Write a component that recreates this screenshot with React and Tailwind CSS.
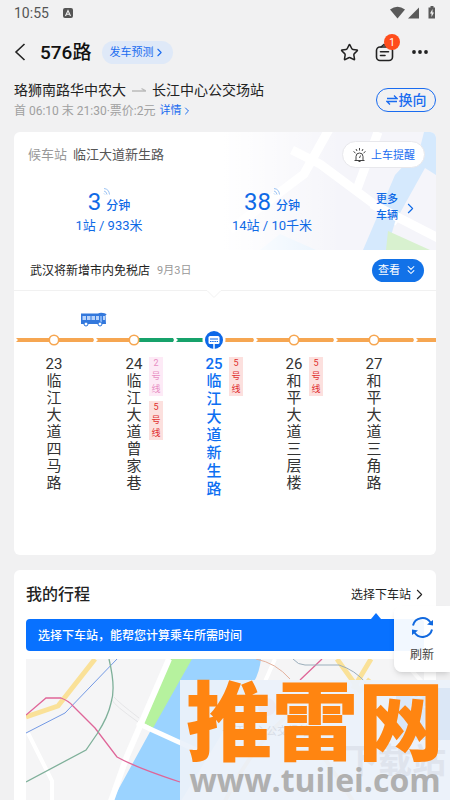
import React from "react";
import { Star, ChevronRight, ChevronsDown } from "lucide-react";

const stations = [
  { no: 23, name: "临江大道四马路", tags: [], left: "#f6a651", right: "#f6a651" },
  { no: 24, name: "临江大道曾家巷", tags: [{ no: 2, pink: true }, { no: 5 }], left: "#f6a651", right: "#17a26b" },
  { no: 25, name: "临江大道新生路", tags: [{ no: 5 }], left: "#17a26b", right: "#f6a651", current: true },
  { no: 26, name: "和平大道三层楼", tags: [{ no: 5 }], left: "#f6a651", right: "#f6a651" },
  { no: 27, name: "和平大道三角路", tags: [], left: "#f6a651", right: "#f6a651" },
  { no: 28, name: "", tags: [], left: "#f6a651", right: "#f6a651", blank: true },
];

function StatusBar() {
  return (
    <div className="flex h-6 shrink-0 items-center justify-between px-[14px] pt-px text-sm text-[#555]">
      <div className="flex items-center gap-[14px]">
        <span>10:55</span>
        <svg className="h-[10px] w-[10px]" viewBox="0 0 10 10" aria-hidden="true">
          <rect width="10" height="10" rx="2" fill="#555" />
          <path d="M2.5 8 5 2.5 7.5 8M3.5 6.2h3" fill="none" stroke="#f1f1f1" strokeWidth="1.1" />
        </svg>
      </div>
      <svg className="h-[13px] w-[46px]" viewBox="0 0 46 13" fill="#5a5a5a" aria-hidden="true">
        <path d="M0 3.5Q7.5-2 15 3.5L7.5 12.5Z" />
        <path d="M29 1.5v11H18Z" />
        <path d="M40.5 0h3v1.5H45v11h-6.5V1.5h2Z" />
        <path d="m42.5 3-2.5 4.5h1.5V11L44 6.5h-1.5Z" fill="#f1f1f1" />
      </svg>
    </div>
  );
}

function Header() {
  return (
    <header className="flex h-14 shrink-0 items-center pl-[9px] pr-[21px]">
      <button aria-label="返回" className="text-[#222]">
        <svg className="h-6 w-6" viewBox="0 0 24 24" fill="none" stroke="currentColor" strokeWidth="1.6" aria-hidden="true"><path d="m15.5 4-8.5 8 8.5 8" /></svg>
      </button>
      <h1 className="ml-[7px] pt-[2px] text-[19px] font-medium text-[#111]">576路</h1>
      <button className="ml-[11px] flex h-[23px] items-center rounded-full bg-[#dfe9f8] px-[7px] text-[11px] leading-[23px] text-[#1a6cf0]">
        <span className="pt-px">发车预测</span><ChevronRight size={13} strokeWidth={2} />
      </button>
      <div className="ml-auto flex items-center gap-4 text-[#222]">
        <button aria-label="收藏"><Star size={19} strokeWidth={1.9} /></button>
        <button aria-label="消息" className="relative">
          <svg className="h-5 w-5" viewBox="0 0 20 20" fill="none" stroke="currentColor" strokeWidth="1.6" strokeLinecap="round" aria-hidden="true">
            <rect x="1.5" y="5" width="16" height="13.5" rx="3.5" />
            <path d="M6 5 9 2.5 12 5M5.5 9.8h8M5.5 13.5H10" />
          </svg>
          <span className="absolute -top-[8px] left-[9px] flex h-4 w-4 items-center justify-center rounded-full bg-[#ff4d1c] text-[10px] text-white">1</span>
        </button>
        <button aria-label="更多">
          <svg className="h-5 w-[18px]" viewBox="0 0 18 20" fill="currentColor" aria-hidden="true"><circle cx="3" cy="10" r="1.9" /><circle cx="9" cy="10" r="1.9" /><circle cx="15" cy="10" r="1.9" /></svg>
        </button>
      </div>
    </header>
  );
}

function RouteInfo() {
  return (
    <section className="flex h-[52px] shrink-0 justify-between px-[14px]">
      <div>
        <h2 className="flex items-center text-sm leading-5 text-[#222]">
          珞狮南路华中农大
          <svg className="mx-[6px] h-2 w-[14px]" viewBox="0 0 14 8" fill="none" stroke="#bbb" strokeWidth="1.3" aria-hidden="true"><path d="M0 5h14L9.5 2.5" /></svg>
          长江中心公交场站
        </h2>
        <p className="flex items-center pt-px text-xs leading-5 text-[#a0a0a0]">
          首 06:10 末 21:30·票价:2元
          <a href="#detail" className="ml-1 flex items-center text-[11px] text-[#1a6cf0]">详情<ChevronRight size={12} strokeWidth={2} /></a>
        </p>
      </div>
      <button className="mt-2 flex h-6 w-[60px] items-center justify-center gap-px rounded-full border border-[#1a6cf0] text-sm font-medium text-[#1a6cf0]">
        <svg className="h-3 w-3" viewBox="0 0 12 12" fill="none" stroke="currentColor" strokeWidth="1.3" aria-hidden="true"><path d="M1 4.5h10L8 1.5M11 7.5H1l3 3" /></svg>
        换向
      </button>
    </section>
  );
}

function Arrival({ minutes, detail }) {
  return (
    <div className="text-center text-[#0f6ae6]">
      <div className="flex items-end justify-center gap-[5px]">
        <span className="text-2xl leading-7">{minutes}</span>
        <span className="relative text-xs font-medium leading-5">
          分钟
          <svg className="absolute -left-[3px] -top-[8px] h-[7px] w-[7px]" viewBox="0 0 7 7" fill="none" stroke="#9cc3f3" aria-hidden="true"><path d="M1 .5Q6 1 6.5 6.5M1 3Q3.5 3.5 4 6.5M1 5.5l1 1" /></svg>
        </span>
      </div>
      <p className="text-[13px] leading-5">{detail}</p>
    </div>
  );
}

function WaitingPanel() {
  return (
    <div className="relative h-[118px] overflow-hidden">
      <svg className="absolute right-0 top-0 h-[118px] w-[236px]" viewBox="0 0 236 118" aria-hidden="true">
        <defs>
          <linearGradient id="fade" x1="0" x2="1"><stop offset=".1" stopColor="#fff" /><stop offset=".6" stopColor="#fff" stopOpacity="0" /></linearGradient>
        </defs>
        <path fill="#f5f5fa" d="M0 0h236v118H0z" />
        <path fill="none" stroke="#fff" strokeWidth="9" d="m132-8-28 50-74 56M92 18l28 14 78 58M178 0l-22 60" />
        <path fill="#d5e9fd" d="M224 0h12v43l-11-7-30 54-8 28h-24l32-75 25-27Z" />
        <path fill="#e8f3fd" d="m60 118 20-16 36 16Z" />
        <path fill="#d8f1cf" d="m188 99 42 19h-44Z" />
        <path stroke="#fff" strokeWidth="9" d="m172 72 70 36" />
        <path fill="url(#fade)" d="M0 0h236v118H0z" />
      </svg>
      <div className="relative flex items-center justify-between pl-[14px] pr-[11px] pt-[9px]">
        <p className="flex gap-[6px] text-[13px] leading-5 text-[#555]"><span className="text-[#999]">候车站</span>临江大道新生路</p>
        <button className="flex h-[27px] items-center gap-[5px] rounded-full border border-[#e8e8ec] bg-white pl-[10px] pr-[9px] text-[11px] leading-[25px] text-[#1a6cf0]">
          <svg className="h-[14px] w-[13px]" viewBox="0 0 13 14" fill="none" stroke="#444" aria-hidden="true"><path d="M1.5 12.5h10M3 12V8.5Q3 5 6.5 5T10 8.5V12M5.5 13.5h2M6.5 0v2.5M3 1l1 2M10 1 9 3M.5 3.5 2.5 5M12.5 3.5l-2 1.5M6.5 10l1-2.5" /></svg>
          <span className="pt-px">上车提醒</span>
        </button>
      </div>
      <div className="relative flex pt-5">
        <div className="w-[190px]"><Arrival minutes="3" detail="1站 / 933米" /></div>
        <div className="w-[136px]"><Arrival minutes="38" detail="14站 / 10千米" /></div>
        <button className="mb-2 ml-auto flex items-center gap-1 pr-[17px] text-[11px] font-medium leading-4 text-[#0f6ae6]"><span>更多<br />车辆</span><ChevronRight size={17} strokeWidth={1.5} /></button>
      </div>
    </div>
  );
}

function Track({ s }) {
  return (
    <svg className="block h-6 w-20" viewBox="0 0 80 24" aria-hidden="true">
      <path fill={s.left} d="M2 10h38v4H2l2-2Z" />
      <path fill={s.right} d="M40 10h39l1 2-1 2H40Z" />
      {s.current ? (
        <g>
          <circle cx="40" cy="12" r="11.5" fill="#fff" />
          <circle cx="40" cy="12" r="9" fill="#0d68e8" />
          <rect x="34.5" y="8" width="11" height="8" rx="1.5" fill="#fff" />
          <path stroke="#fff" strokeWidth="1.5" d="M40 16v5" />
          <path stroke="#0d68e8" d="M36 11h8" />
          <path stroke="#0d68e8" d="M36 13.5h8" strokeDasharray="1.5 .7" />
        </g>
      ) : s.blank ? null : (
        <circle cx="40" cy="12" r="4.7" fill="#fff" stroke="#f6a651" strokeWidth="1.6" />
      )}
    </svg>
  );
}

function Station({ s }) {
  return (
    <li className="w-20 shrink-0">
      <Track s={s} />
      {!s.blank && (
        <div className="relative mt-1 flex justify-center">
          <button className={s.current ? "flex flex-col items-center text-[15px] font-medium leading-[18px] text-[#0d6ff2]" : "flex flex-col items-center text-[15px] leading-[17px] text-[#333]"}>
            <span className={s.current ? "leading-4" : "leading-[17px]"}>{s.no}</span>
            <span className="w-[15px] break-all">{s.name}</span>
          </button>
          <div className="absolute left-[55px] top-px flex flex-col gap-[5px]">
            {s.tags.map((t) => (
              <span key={t.no} className={t.pink ? "w-[14px] bg-[#fdeaf6] px-[2px] text-center text-[9px] leading-[13px] text-[#e88fc4] break-all" : "w-[14px] bg-[#fce0de] px-[2px] text-center text-[9px] leading-[13px] text-[#e02f2f] break-all"}>
                {t.no}<br />号线
              </span>
            ))}
          </div>
        </div>
      )}
    </li>
  );
}

function LineCard() {
  return (
    <section className="h-[423px] shrink-0 overflow-hidden rounded-md bg-white">
      <WaitingPanel />
      <div className="flex h-10 items-center pl-4 pr-3 text-xs">
        <span className="pt-px text-[#222]">武汉将新增市内免税店</span>
        <span className="ml-[7px] pt-[2px] text-[11px] text-[#999]">9月3日</span>
        <button className="ml-auto flex h-[23px] w-[52px] items-center justify-center gap-1 rounded-full bg-[#1272e8] text-[11px] leading-[23px] text-white"><span className="pt-px">查看</span><ChevronsDown size={14} strokeWidth={1.8} /></button>
      </div>
      <svg className="block h-2 w-full" viewBox="0 0 422 8" fill="none" stroke="#f1f1f1" aria-hidden="true"><path d="M0 .5h193l7 7 7-7h215" /></svg>
      <svg className="ml-[66px] mt-[14px] block h-4 w-[27px]" viewBox="0 0 27 16" aria-hidden="true">
        <path fill="#3378dc" d="M1 1.5h17q2-1 5-.5 3.500.5 3.500 1.500l-1 1 .5 8.500H1Z" />
        <path fill="#b8d3fa" d="M2.5 4H6v4H2.5zM7 4h3.5v4H7zM11.5 4H15v4h-3.5zM16 4h3v4h-3zM23 4h2v4h-2z" />
        <path fill="#7fb0f5" d="M20 4h2v7h-2z" />
        <circle cx="6" cy="12" r="2" fill="#fff" stroke="#2470dc" /><circle cx="20" cy="12" r="2" fill="#fff" stroke="#2470dc" />
      </svg>
      <ol className="flex">{stations.map((s) => <Station key={s.no} s={s} />)}</ol>
    </section>
  );
}

function RouteMap() {
  return (
    <svg className="mt-2 block h-[142px] w-full" viewBox="26 659 398 142" preserveAspectRatio="xMidYMin slice" role="img" aria-label="地图">
      <path fill="#f5f5f6" d="M26 659h398v142H26z" />
      <path fill="#9bd3ff" d="M190 659h71q-2 17-10 27l-70 115h-69Z" />
      <path fill="#b6f29e" d="M171 659h21l-39 69-9-5Z" />
      <g fill="none" stroke="#fff">
        <path strokeWidth="6" d="m169 659-42 97-16 45" />
        <path strokeWidth="5" d="m137 723 90 41" />
        <path strokeWidth="4" d="M28 733q11 22 24 48v20M275 659l-31 70M401 659l23 25" />
      </g>
      <path fill="none" stroke="#e6e6e8" d="M112 700q2 5 26 22M114 697q4 5 25 21" />
      <path fill="none" stroke="#fae198" strokeWidth="5" d="m26 717 32-11 37-47M337 659l23 32 10-12M371 659l-18 30" />
      <g fill="none" strokeWidth="1">
        <path stroke="#7399e4" d="m26 733 39-20 52-54" />
        <path stroke="#df6598" strokeWidth="1.3" d="m26 715 20-17h15q8 3 12 8l22 22 22 29q20 11 63 25M300 680l22-21" />
        <path stroke="#7fb09a" strokeWidth="1.3" d="M109 659q7 29 2 44-3 14-14 31l-11 16-60 32" />
        <path stroke="#e3b09b" d="M256 659q20 4 34 20" />
        <path stroke="#9baebb" d="M293 659q5 6 12 6h34q16 5 27 18" />
      </g>
      <circle cx="267" cy="707" r="9" fill="#f0605a" />
      <path d="M225 801q30-60 68-90l60 90" fill="none" stroke="#f0b878" strokeWidth="4" />
    </svg>
  );
}

function TripCard() {
  return (
    <section className="mt-[15px] shrink-0 rounded-t-md bg-white px-3">
      <div className="flex h-[49px] items-center justify-between">
        <h2 className="pt-px text-base font-medium text-[#222]">我的行程</h2>
        <button className="-mr-1 flex items-center text-xs text-[#222]">选择下车站<ChevronRight size={17} strokeWidth={1.5} /></button>
      </div>
      <div className="relative h-8 rounded bg-[#0871ff] px-3 text-xs font-medium leading-[34px] text-white">
        选择下车站，能帮您计算乘车所需时间
        <svg className="absolute -top-[6px] right-[43px] h-[6px] w-[10px]" viewBox="0 0 10 6" fill="#0871ff" aria-hidden="true"><path d="M5 0 10 6H0Z" /></svg>
      </div>
      <RouteMap />
    </section>
  );
}

export default function App() {
  return (
    <div className="relative flex h-screen w-full flex-col overflow-hidden bg-[#f1f1f2] font-['Roboto','Noto_Sans_CJK_SC',sans-serif]">
      <StatusBar />
      <Header />
      <RouteInfo />
      <main className="px-[14px]">
        <LineCard />
        <TripCard />
      </main>
      <button className="absolute right-0 top-[606px] flex h-[66px] w-14 flex-col items-center gap-2 rounded-l-lg bg-white/95 pt-[10px] text-xs text-[#444] shadow-md">
        <svg className="h-[23px] w-[23px]" viewBox="0 0 23 23" fill="none" stroke="#1169df" strokeWidth="2" aria-hidden="true">
          <path d="M2 9.5A9.7 9.7 0 0 1 19.5 6.5M21 13.5A9.7 9.7 0 0 1 3.5 16.5" />
          <path d="m16 8.5 6 1V4ZM7 14.5l-6-1V19Z" fill="#1169df" stroke="none" />
        </svg>
        刷新
      </button>
      <div className="absolute bottom-0 right-0 h-[120px] w-[270px] bg-[#ebf1fa]/95 text-center">
        <div className="absolute right-0 top-2 w-[54px] rounded-l-md bg-[#dbe7f6] text-sm font-bold leading-[26px] text-[#e6effa]">意见<br />反馈</div>
        <div className="absolute left-[42px] top-[44px] text-[11px] text-[#d6dce6]">长江中心公交场站</div>
        <div className="absolute right-1 top-[56px] text-[34px] font-bold text-[#dfe4ed]">下载站</div>
        <p className="relative whitespace-nowrap pt-[2px] text-[86px] font-black leading-[86px] text-[#ff8511]">推雷网</p>
        <p className="relative whitespace-nowrap font-['Open_Sans',sans-serif] text-[32px] font-bold leading-6 text-[#b0b0b0]">www.tuilei.com</p>
      </div>
    </div>
  );
}
